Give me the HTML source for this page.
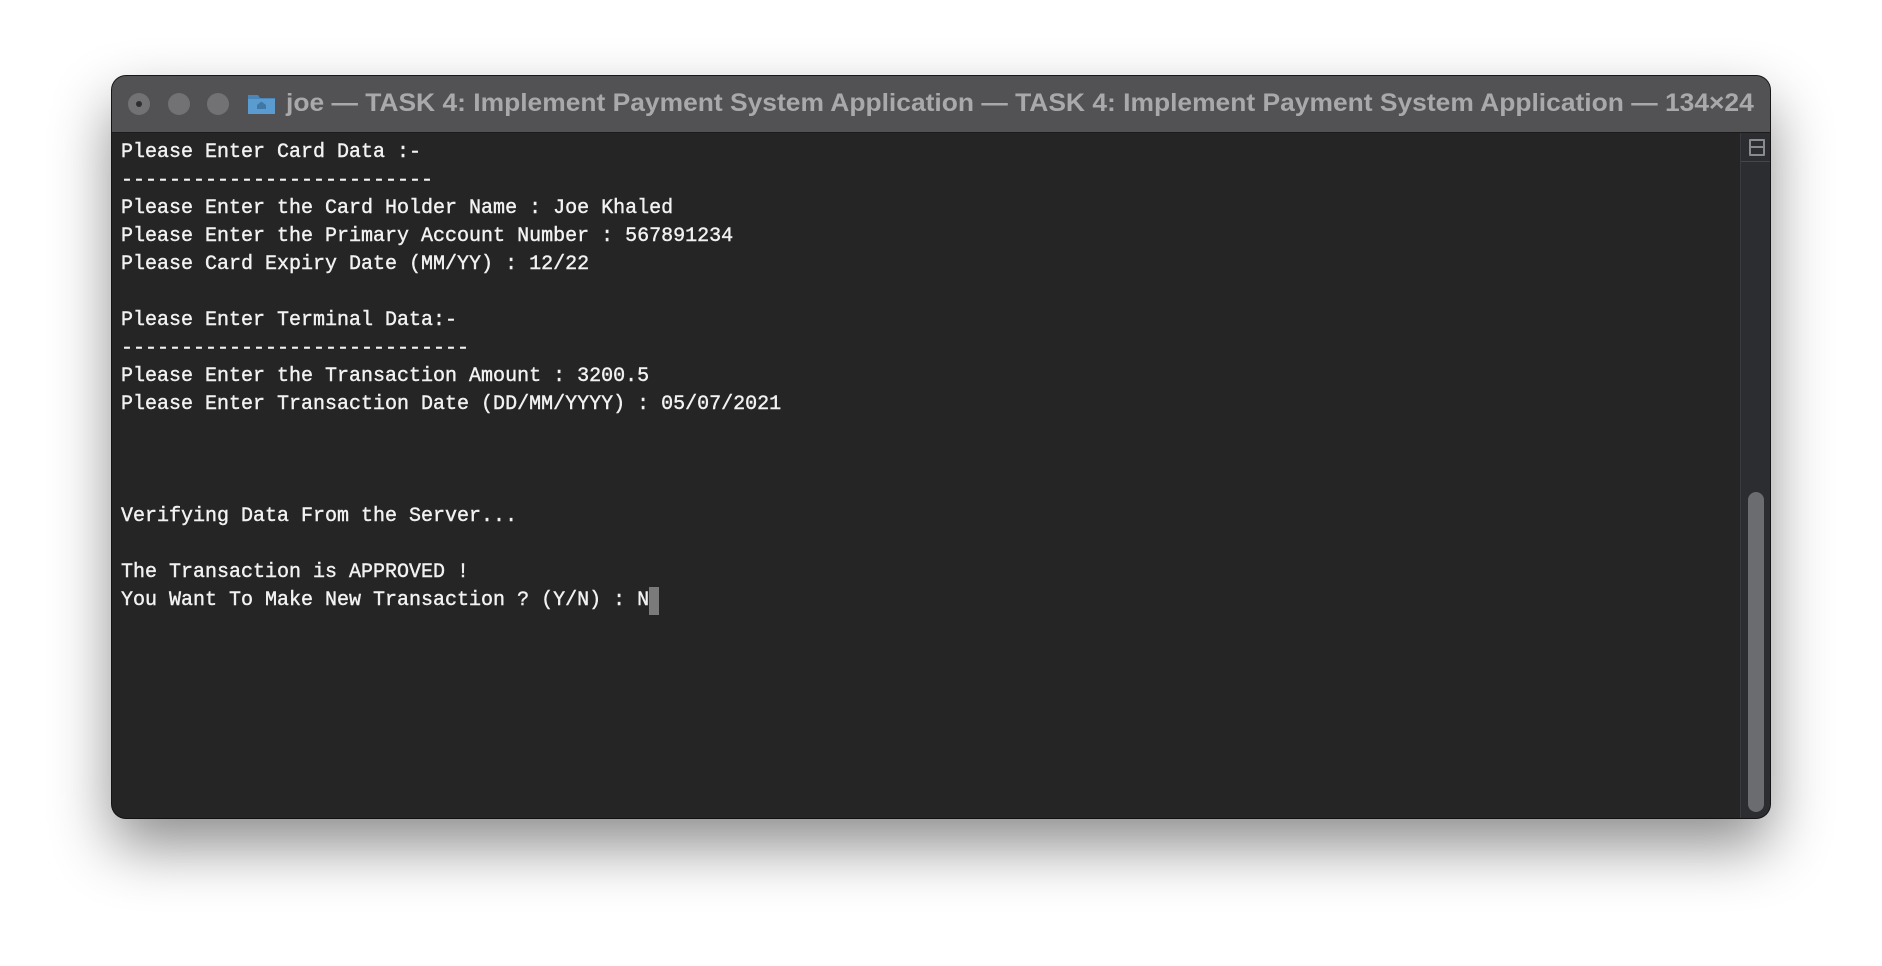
<!DOCTYPE html>
<html><head><meta charset="utf-8"><style>
html,body{margin:0;padding:0;background:#fff;width:1882px;height:966px;overflow:hidden}
.win{position:absolute;left:112px;top:76px;width:1658px;height:742px;border-radius:14px;background:#252525;box-shadow:0 28px 60px rgba(0,0,0,.45),0 0 0 1px #1a1a1a;overflow:hidden}
.tb{position:absolute;left:0;top:0;right:0;height:56px;background:#525254;border-bottom:1px solid #1c1c1c}
.dot{position:absolute;top:17px;width:22px;height:22px;border-radius:50%;background:#727274}
.dot i{position:absolute;left:8px;top:8px;width:6px;height:6px;border-radius:50%;background:#2e2e2e}
.title{position:absolute;left:174px;top:13px;font:bold 25px "Liberation Sans",sans-serif;color:#a9a9ab;white-space:nowrap;transform-origin:left center;transform:scaleX(1.056)}
.fold{position:absolute;left:135px;top:16px;width:29px;height:23px}
.term{position:absolute;left:9px;top:63px;font:20px/28px "Liberation Mono",monospace;color:#f2f2f2;white-space:pre;-webkit-text-stroke:0.4px #f2f2f2}
.sc{position:absolute;right:0;top:57px;width:29px;bottom:0;background:#2c2d30;border-left:1px solid #3a3b3e}
.btn{position:absolute;left:0;top:0;width:29px;height:28px;border-bottom:1px solid #45464a}
.btn i{position:absolute;left:8px;top:6px;width:12px;height:13px;border:2px solid #8a8a8e;border-radius:1px}
.btn i:after{content:"";position:absolute;left:0;right:0;top:5px;height:2px;background:#8a8a8e}
.thumb{position:absolute;left:7px;top:359px;width:16px;height:320px;border-radius:8px;background:#6b6c70}
.cur{display:inline-block;width:10px;height:28px;background:#7a7a7a;vertical-align:top;-webkit-text-stroke:0}
</style></head><body>
<div class="win">
 <div class="tb">
  <div class="dot" style="left:16px"><i></i></div>
  <div class="dot" style="left:56px"></div>
  <div class="dot" style="left:95px"></div>
  <svg class="fold" viewBox="0 0 29 23"><path d="M1 3h10l2 3h15v16H1z" fill="#4a86b8"/><rect x="1" y="7" width="27" height="15" fill="#5a9ccf"/><path d="M10 17v-4l4.5-3.5 4.5 3.5v4z" fill="#3f77a6"/></svg>
  <div class="title">joe — TASK 4: Implement Payment System Application — TASK 4: Implement Payment System Application — 134×24</div>
 </div>
 <div class="term">Please Enter Card Data :-
--------------------------
Please Enter the Card Holder Name : Joe Khaled
Please Enter the Primary Account Number : 567891234
Please Card Expiry Date (MM/YY) : 12/22

Please Enter Terminal Data:-
-----------------------------
Please Enter the Transaction Amount : 3200.5
Please Enter Transaction Date (DD/MM/YYYY) : 05/07/2021



Verifying Data From the Server...

The Transaction is APPROVED !
You Want To Make New Transaction ? (Y/N) : N<span class="cur"></span></div>
 <div class="sc"><div class="btn"><i></i></div><div class="thumb"></div></div>
</div>
</body></html>
